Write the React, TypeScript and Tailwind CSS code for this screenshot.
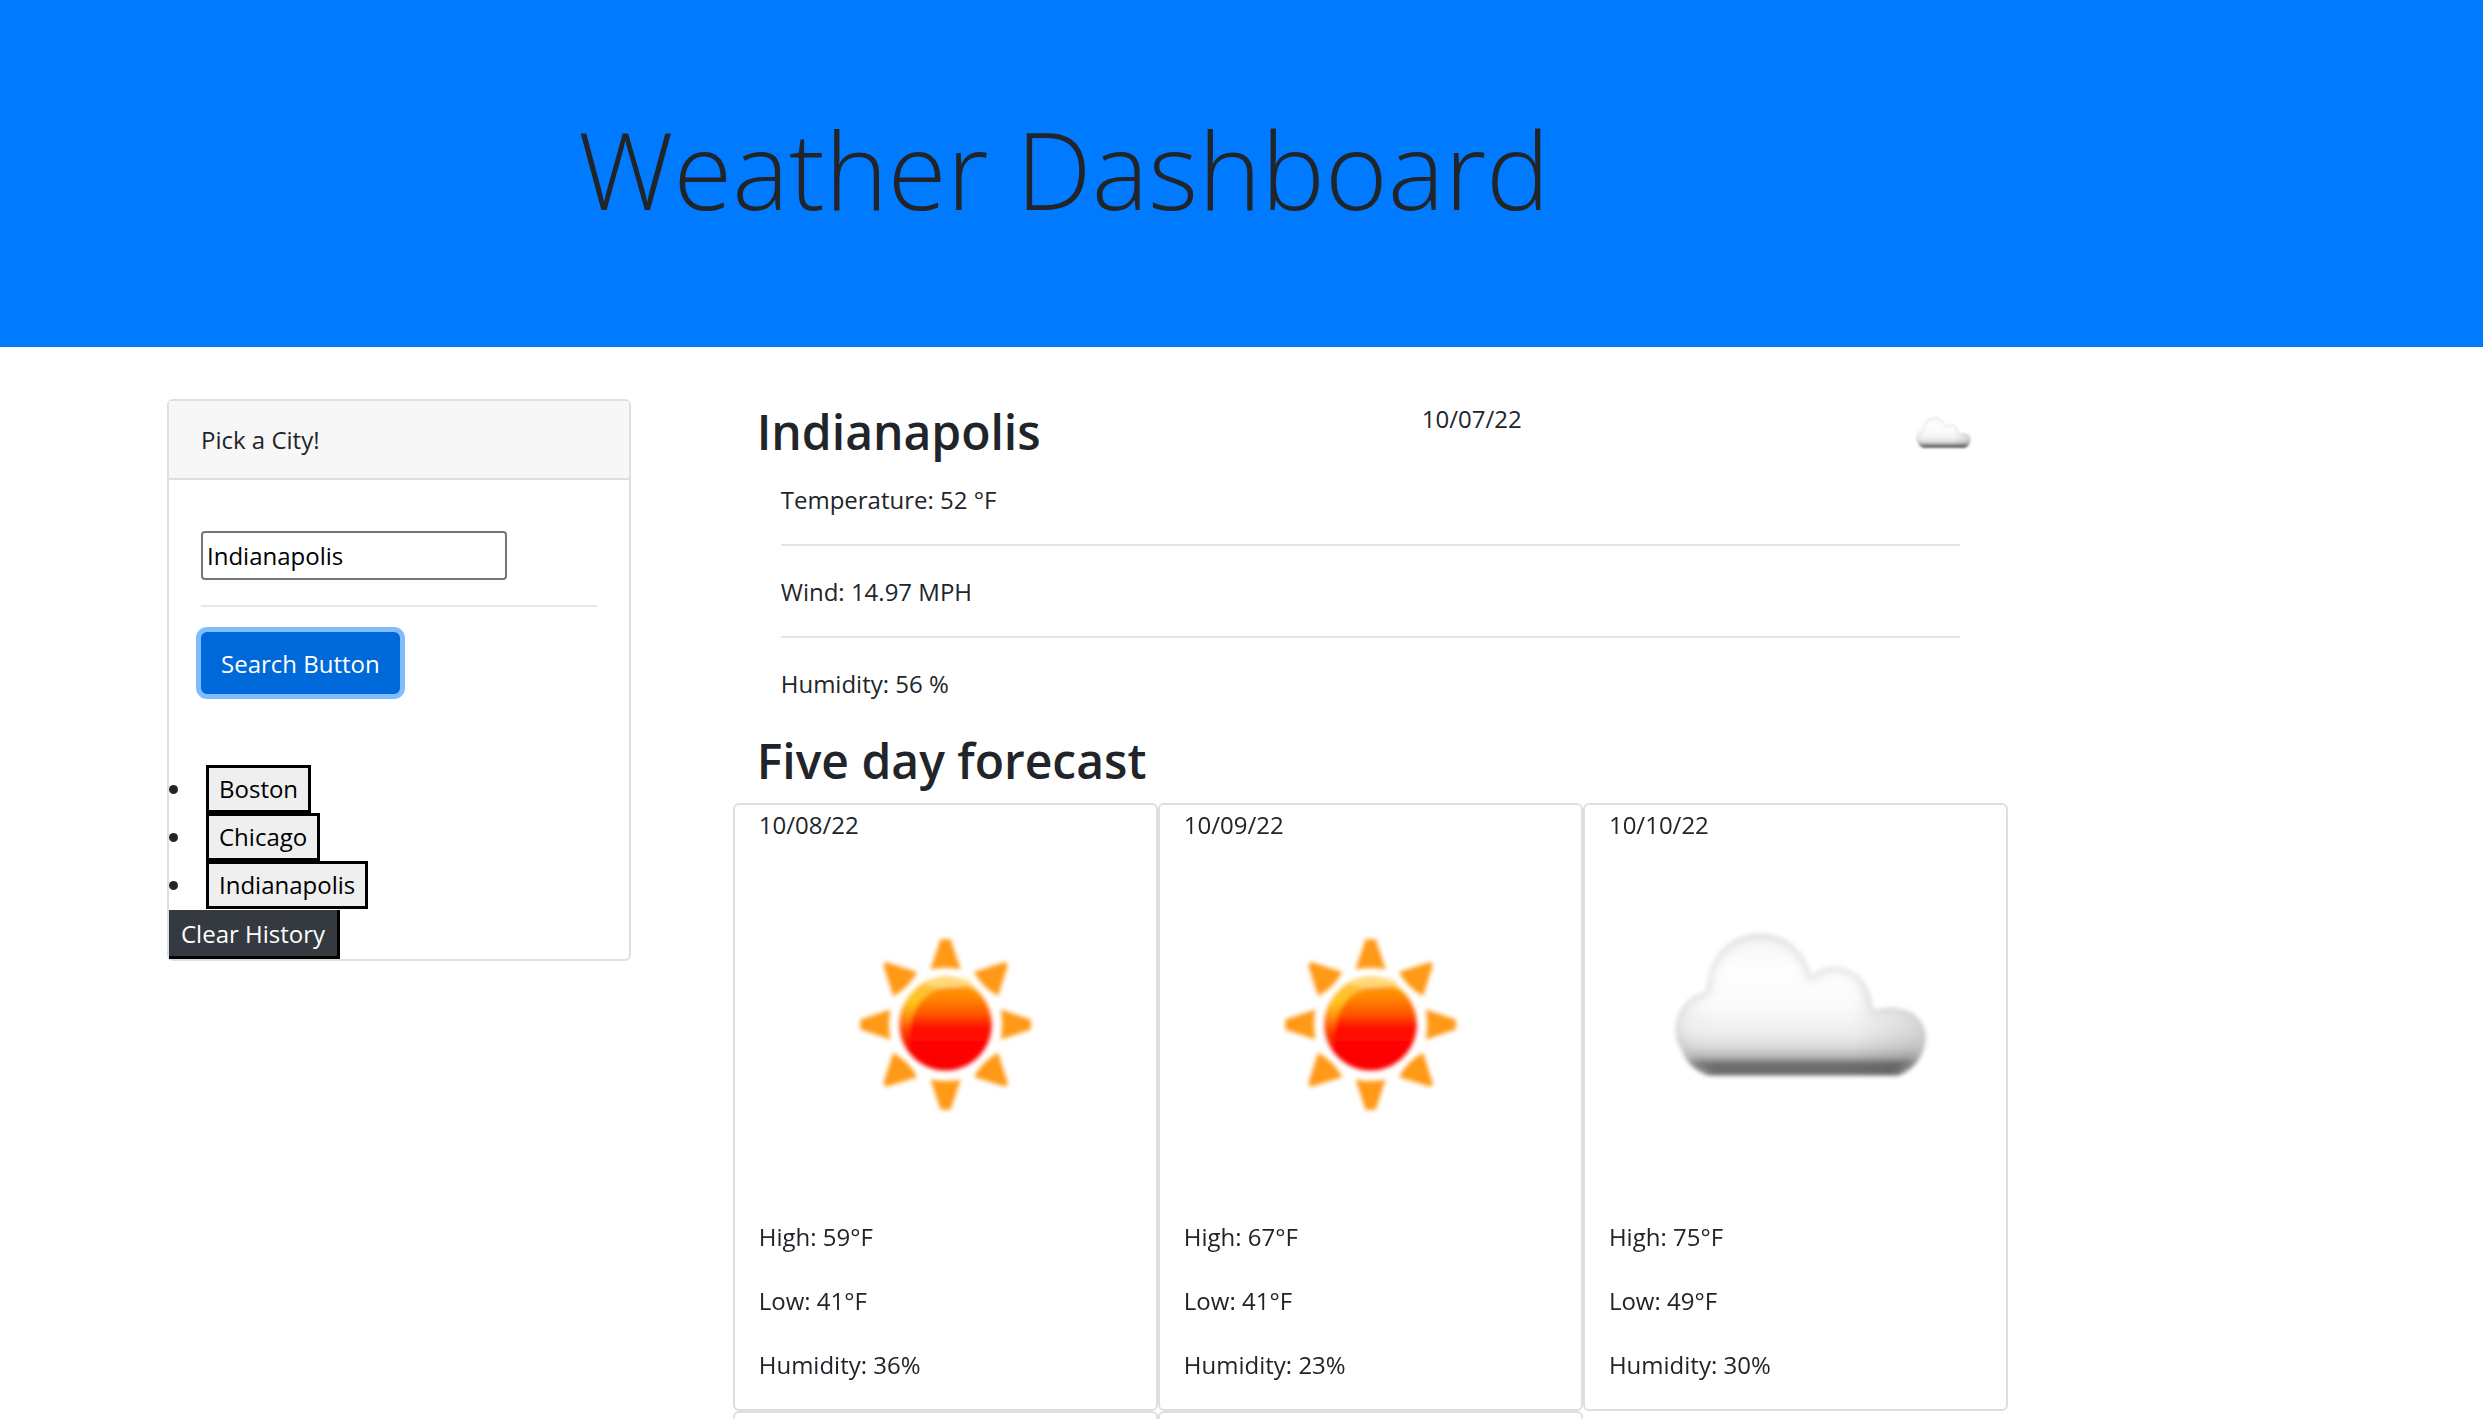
import { useState } from "react";

const CLOUD =
  "M34 142 C22 138 12 129 8 118 C-2 104 0 88 6 77 C12 66 22 60 32 58 C32 26 54 0 86 0 C110 0 130 16 137 42 C146 34 156 32 166 34 C184 37 195 50 199 77 C206 74 216 73 224 75 C240 77 251 89 251 104 C250 122 240 135 224 142 Z";

function CloudShape({ id, blur }: { id: string; blur: number }) {
  return (
    <>
      <defs>
        <linearGradient id={`${id}-fill`} x1="0" y1="0" x2="0" y2="1">
          <stop offset="0" stopColor="#f4f4f4" />
          <stop offset="0.25" stopColor="#fefefe" />
          <stop offset="0.5" stopColor="#fbfbfb" />
          <stop offset="0.7" stopColor="#eeeeee" />
          <stop offset="0.8" stopColor="#dadada" />
          <stop offset="0.87" stopColor="#b4b4b4" />
          <stop offset="0.92" stopColor="#6c6c6c" />
          <stop offset="1" stopColor="#6c6c6c" />
        </linearGradient>
        <linearGradient id={`${id}-side`} x1="0" y1="0" x2="1" y2="0">
          <stop offset="0" stopColor="#000" stopOpacity="0.03" />
          <stop offset="0.15" stopColor="#000" stopOpacity="0" />
          <stop offset="0.7" stopColor="#000" stopOpacity="0" />
          <stop offset="1" stopColor="#000" stopOpacity="0.12" />
        </linearGradient>
        <clipPath id={`${id}-clip`}>
          <path d={CLOUD} />
        </clipPath>
        <filter id={`${id}-soft`} x="-10%" y="-10%" width="120%" height="120%">
          <feGaussianBlur stdDeviation={blur} />
        </filter>
        <filter id={`${id}-edge`} x="-10%" y="-10%" width="120%" height="120%">
          <feGaussianBlur stdDeviation="4" />
        </filter>
      </defs>
      <g filter={`url(#${id}-soft)`}>
        <path d={CLOUD} fill={`url(#${id}-fill)`} />
        <path d={CLOUD} fill={`url(#${id}-side)`} />
        <g clipPath={`url(#${id}-clip)`}>
          <path
            d={CLOUD.replace("Z", "")}
            fill="none"
            stroke="#c8c8c8"
            strokeWidth="8"
            opacity="0.6"
            filter={`url(#${id}-edge)`}
          />
        </g>
      </g>
    </>
  );
}

function SunShape({ id }: { id: string }) {
  return (
    <>
      <defs>
        <linearGradient id={`${id}-disc`} x1="0" y1="0" x2="0" y2="1">
          <stop offset="0" stopColor="#ff9a10" />
          <stop offset="0.2" stopColor="#ff8a00" />
          <stop offset="0.4" stopColor="#ff5200" />
          <stop offset="0.54" stopColor="#ff0a00" />
          <stop offset="1" stopColor="#fc0000" />
        </linearGradient>
        <linearGradient id={`${id}-glow`} x1="0" y1="0" x2="0" y2="1">
          <stop offset="0" stopColor="#ffc050" />
          <stop offset="0.35" stopColor="#ffc41c" />
          <stop offset="1" stopColor="#ff7a00" stopOpacity="0" />
        </linearGradient>
        <filter id={`${id}-soft`} x="-10%" y="-10%" width="120%" height="120%">
          <feGaussianBlur stdDeviation="2" />
        </filter>
      </defs>
      <g filter={`url(#${id}-soft)`}>
        {[0, 90, 180, 270].map((a) => (
          <path key={a} d="M-5 -85 H5 L15 -55 Q0 -58 -15 -55 Z" fill="#ff9914" transform={`rotate(${a})`} />
        ))}
        {[45, 135, 225, 315].map((a) => (
          <path key={a} d="M-2 -86 H2 L17 -57 Q0 -52 -17 -57 Z" fill="#ff9914" transform={`rotate(${a})`} />
        ))}
        <circle r="46" fill={`url(#${id}-disc)`} />
        <path d="M-42 22 C-52 -8 -38 -46 0 -48 C18 -47 26 -41 32 -33 C14 -42 -12 -38 -24 -24 C-36 -8 -36 6 -36 26 Z" fill={`url(#${id}-glow)`} />
        <ellipse cx="2" cy="-42" rx="24" ry="5" fill="#ffe08a" opacity="0.8" />
      </g>
    </>
  );
}

type Day = { date: string; sky: "sun" | "cloud"; high: number; low: number; humidity: number };

const days: Day[] = [
  { date: "10/08/22", sky: "sun", high: 59, low: 41, humidity: 36 },
  { date: "10/09/22", sky: "sun", high: 67, low: 41, humidity: 23 },
  { date: "10/10/22", sky: "cloud", high: 75, low: 49, humidity: 30 },
];

function DayCard({ day, index }: { day: Day; index: number }) {
  return (
    <article className="rounded-md border-2 border-[#dfdfdf] pb-[25px]">
      <p className="px-6">{day.date}</p>
      <svg viewBox="0 0 420 372" className="w-full" role="img" aria-label={day.sky === "sun" ? "Sunny" : "Cloudy"}>
        {day.sky === "sun" ? (
          <g transform="translate(210 180)">
            <SunShape id={`day${index}`} />
          </g>
        ) : (
          <g transform="translate(89 89)">
            <CloudShape id={`day${index}`} blur={2} />
          </g>
        )}
      </svg>
      <div className="flex flex-col gap-[25px] px-6">
        <p>High: {day.high}°F</p>
        <p>Low: {day.low}°F</p>
        <p>Humidity: {day.humidity}%</p>
      </div>
    </article>
  );
}

export default function App() {
  const [city, setCity] = useState("Indianapolis");
  return (
    <div className="bg-white font-['Open_Sans','Noto_Sans',sans-serif] text-[24px] leading-[39px] text-[#212529]">
      <header className="h-[347px] bg-[#007bff] pt-[94px] pl-[578px]">
        <h1 className="text-[107px] leading-[150px] font-light whitespace-nowrap">Weather Dashboard</h1>
      </header>

      <main className="grid grid-cols-[4fr_11fr] items-start gap-[102px] pt-[52px] pr-[475px] pl-[167px]">
        <aside className="rounded-md border-2 border-[#dfdfdf]">
          <label htmlFor="city" className="block border-b-2 border-[#dfdfdf] bg-[#f7f7f7] px-8 py-[19px]">
            Pick a City!
          </label>
          <form className="px-8 pt-[51px] pb-[71px]" onSubmit={(e) => e.preventDefault()}>
            <input
              id="city"
              value={city}
              onChange={(e) => setCity(e.target.value)}
              className="block h-[49px] w-[306px] rounded border-2 border-[#767676] px-1 text-black"
            />
            <hr className="my-[25px] border-t-2 border-[#e8e8e8]" />
            <button className="h-[62px] rounded-md bg-[#0069d9] px-5 text-white ring-5 ring-[#80bdff]">
              Search Button
            </button>
          </form>
          <ul className="list-disc pl-6 leading-[48px]">
            {["Boston", "Chicago", "Indianapolis"].map((name) => (
              <li key={name} className="h-[48px]">
                <button
                  type="button"
                  onClick={() => setCity(name)}
                  className="ml-[13px] flex h-[48px] items-center border-3 border-black bg-[#efefef] px-[10px] text-black"
                >
                  {name}
                </button>
              </li>
            ))}
          </ul>
          <button className="mt-px block h-[49px] border-r-3 border-b-3 border-black bg-[#343a40] px-3 text-white">
            Clear History
          </button>
        </aside>

        <div>
          <section className="px-6">
            <div className="flex items-start justify-between">
              <h2 className="text-[48px] leading-[66px] font-semibold">Indianapolis</h2>
              <p>10/07/22</p>
              <svg viewBox="0 0 81 81" className="size-[81px]" role="img" aria-label="Cloudy">
                <g transform="translate(13 18) scale(0.218)">
                  <CloudShape id="now" blur={4} />
                </g>
              </svg>
            </div>
            <div className="px-6">
              <p>Temperature: 52 °F</p>
              <hr className="mt-[25px] mb-[26px] border-t-2 border-[#e5e5e5]" />
              <p>Wind: 14.97 MPH</p>
              <hr className="mt-[25px] mb-[26px] border-t-2 border-[#e5e5e5]" />
              <p>Humidity: 56 %</p>
            </div>
          </section>
          <h2 className="mt-[25px] mb-[9px] px-6 text-[48px] leading-[66px] font-semibold">Five day forecast</h2>
          <section className="grid grid-cols-3">
            {days.map((day, i) => (
              <DayCard key={day.date} day={day} index={i} />
            ))}
            <div className="h-2 rounded-t-md border-2 border-b-0 border-[#dfdfdf]" />
            <div className="h-2 rounded-t-md border-2 border-b-0 border-[#dfdfdf]" />
          </section>
        </div>
      </main>
    </div>
  );
}
